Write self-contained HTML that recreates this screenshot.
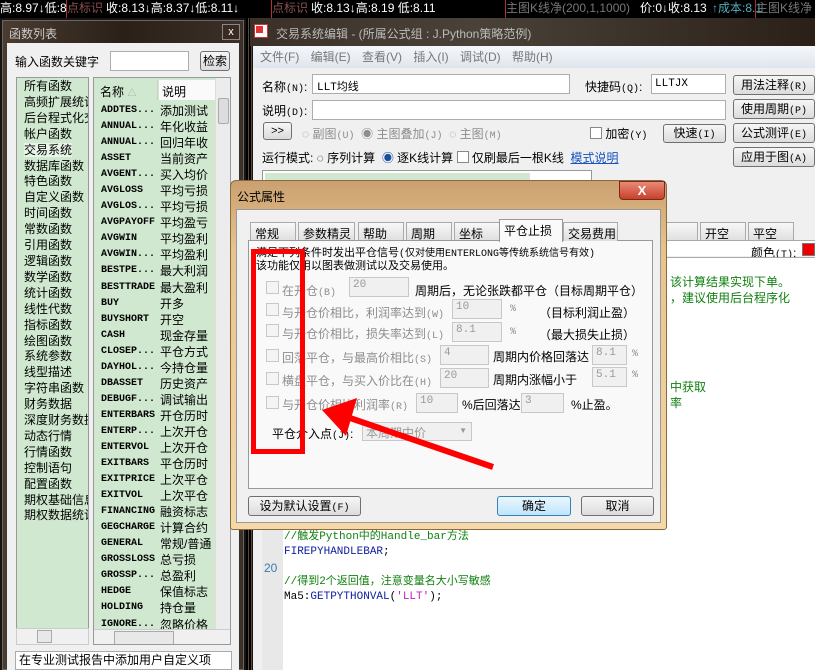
<!DOCTYPE html>
<html><head><meta charset="utf-8"><style>
*{margin:0;padding:0;box-sizing:border-box}
body{width:815px;height:670px;overflow:hidden;background:#1a1410;font-family:"Liberation Sans","Noto Sans CJK SC",sans-serif;font-size:12px;color:#000;position:relative}
.a{position:absolute;white-space:nowrap}
.in{position:absolute;background:#fff;border:1px solid #abadb3}
.btn{position:absolute;border:1px solid #707070;border-radius:3px;background:linear-gradient(#f6f6f6,#dcdcdc);text-align:center;font-size:12px;white-space:nowrap}
.mono{font-family:"Liberation Mono","Noto Sans CJK SC",monospace;font-size:10px}
.cb{position:absolute;width:13px;height:13px;border:1px solid #c8c8c8;background:#f4f4f4}
.dis{color:#8d8d8d}
.din{position:absolute;background:#f0f0f0;border:1px solid #c8c8c8;color:#999;font-size:11px;padding:1px 3px;font-family:"Liberation Mono",monospace}
.tab{position:absolute;top:222px;height:19px;border:1px solid #aaa;border-bottom:none;background:linear-gradient(#f8f8f8,#dedede);padding:2px 4px;font-size:12px;white-space:nowrap;overflow:hidden}
</style></head><body>
<div class="a" style="left:0;top:0;width:815px;height:18px;background:#000;color:#fff;font-size:12px;line-height:16px">
<span class="a" style="left:0">高:8.97↓低:8</span>
<span class="a" style="left:67px;color:#8a5050">点标识</span><span class="a" style="left:106px">收:8.13↓高:8.37↓低:8.11↓</span>
<span class="a" style="left:272px;color:#8a5050">点标识</span><span class="a" style="left:311px">收:8.13↓高:8.19 低:8.11</span>
<span class="a" style="left:506px;color:#777">主图K线净(200,1,1000)</span><span class="a" style="left:640px">价:0↓收:8.13</span><span class="a" style="left:712px;color:#5ab">↑成本:8.1</span><span class="a" style="left:756px;color:#777">主图K线净</span>
<div class="a" style="left:66px;top:0;width:1px;height:18px;background:#a33"></div>
<div class="a" style="left:271px;top:0;width:1px;height:18px;background:#a33"></div>
<div class="a" style="left:505px;top:0;width:1px;height:18px;background:#a33"></div>
<div class="a" style="left:755px;top:0;width:1px;height:18px;background:#a33"></div>
</div>

<div class="a" style="left:2px;top:20px;width:242px;height:650px;background:linear-gradient(90deg,#4a3c30,#2a2018 50%,#3c3028);border:1px solid #666"></div>
<div class="a" style="left:9px;top:25px;color:#ccc;font-size:12px">函数列表</div>
<div class="a" style="left:222px;top:24px;width:18px;height:16px;background:#3a2a22;border:1px solid #888;color:#fff;text-align:center;font-size:11px;line-height:14px">x</div>
<div class="a" style="left:7px;top:43px;width:232px;height:627px;background:#f0f0f0"></div>
<div class="a" style="left:15px;top:53px;font-size:12px">输入函数关键字</div>
<div class="in" style="left:110px;top:51px;width:79px;height:20px"></div>
<div class="btn" style="left:200px;top:51px;width:30px;height:20px;line-height:18px">检索</div>
<div class="a" style="left:16px;top:77px;width:73px;height:568px;background:#cfe8cf;border:1px solid #999;overflow:hidden;font-size:12px;line-height:15.9px;padding:1px 0 0 7px">所有函数<br>高频扩展统计<br>后台程式化交<br>帐户函数<br><span style="background:#e8f4e8">交易系统</span><br>数据库函数<br>特色函数<br>自定义函数<br>时间函数<br>常数函数<br>引用函数<br>逻辑函数<br>数学函数<br>统计函数<br>线性代数<br>指标函数<br>绘图函数<br>系统参数<br>线型描述<br>字符串函数<br>财务数据<br>深度财务数据<br>动态行情<br>行情函数<br>控制语句<br>配置函数<br>期权基础信息<br>期权数据统计</div>
<div class="a" style="left:16px;top:628px;width:73px;height:17px;background:#f0f0f0;border:1px solid #ccc"><div class="a" style="left:20px;top:1px;width:15px;height:13px;border:1px solid #aaa;background:#e8e8e8"></div></div>
<div class="a" style="left:93px;top:77px;width:138px;height:568px;background:#cfe8cf;border:1px solid #999;overflow:hidden">
<div class="a" style="left:2px;top:2px;width:62px;height:20px;background:#cfe8cf;border-right:1px solid #ccc;font-size:12px;padding:3px 4px">名称 <span style="color:#aaa;font-size:9px">△</span></div>
<div class="a" style="left:65px;top:2px;width:56px;height:20px;background:#fafafa;font-size:12px;padding:3px 3px">说明</div>
<div class="a" style="left:121px;top:0;width:16px;height:555px;background:#ececec;border-left:1px solid #ddd"><div class="a" style="left:2px;top:20px;width:11px;height:26px;background:#ddd;border:1px solid #aaa;border-radius:2px"></div></div>
<div class="a mono" style="left:7px;top:25px;line-height:16.05px;font-weight:bold;font-size:10px">ADDTES...<br>ANNUAL...<br>ANNUAL...<br>ASSET<br>AVGENT...<br>AVGLOSS<br>AVGLOS...<br>AVGPAYOFF<br>AVGWIN<br>AVGWIN...<br>BESTPE...<br>BESTTRADE<br>BUY<br>BUYSHORT<br>CASH<br>CLOSEP...<br>DAYHOL...<br>DBASSET<br>DEBUGF...<br>ENTERBARS<br>ENTERP...<br>ENTERVOL<br>EXITBARS<br>EXITPRICE<br>EXITVOL<br>FINANCING<br>GEGCHARGE<br>GENERAL<br>GROSSLOSS<br>GROSSP...<br>HEDGE<br>HOLDING<br>IGNORE...</div>
<div class="a" style="left:66px;top:25px;line-height:16.05px;font-size:12px;width:55px;overflow:hidden">添加测试<br>年化收益<br>回归年收<br>当前资产<br>买入均价<br>平均亏损<br>平均亏损<br>平均盈亏<br>平均盈利<br>平均盈利<br>最大利润<br>最大盈利<br>开多<br>开空<br>现金存量<br>平仓方式<br>今持仓量<br>历史资产<br>调试输出<br>开仓历时<br>上次开仓<br>上次开仓<br>平仓历时<br>上次平仓<br>上次平仓<br>融资标志<br>计算合约<br>常规/普通<br>总亏损<br>总盈利<br>保值标志<br>持仓量<br>忽略价格</div>
<div class="a" style="left:0;top:551px;width:138px;height:17px;background:#f0f0f0;border-top:1px solid #ccc"><div class="a" style="left:20px;top:1px;width:60px;height:14px;border:1px solid #aaa;background:#e8e8e8"></div></div>
</div>
<div class="a" style="left:15px;top:651px;width:217px;height:19px;background:#fff;border:1px solid #aaa;font-size:12px;padding-left:3px;line-height:17px">在专业测试报告中添加用户自定义项</div>

<div class="a" style="left:246px;top:18px;width:6px;height:652px;background:repeating-linear-gradient(90deg,#000 0 2px,#5a4a3a 2px 3px)"></div>
<div class="a" style="left:250px;top:18px;width:565px;height:28px;background:linear-gradient(90deg,#3a3028,#4a4238 40%,#2a2018)"></div>
<div class="a" style="left:254px;top:24px;width:14px;height:14px;background:#fff;border:1px solid #c33"><div class="a" style="left:1px;top:1px;width:7px;height:7px;background:#d33"></div></div>
<div class="a" style="left:276px;top:25px;color:#bbb;font-size:12px">交易系统编辑 - (所属公式组 : J.Python策略范例)</div>
<div class="a" style="left:253px;top:46px;width:562px;height:624px;background:#f0f0f0"></div>
<div class="a" style="left:253px;top:46px;width:562px;height:22px;background:linear-gradient(#f4f7fb,#e0e6ee);color:#777;font-size:12px;line-height:22px;padding-left:7px;word-spacing:8px">文件(F) 编辑(E) 查看(V) 插入(I) 调试(D) 帮助(H)</div>
<div class="a" style="left:262px;top:78px">名称<span class="mono">(N)</span>:</div>
<div class="in" style="left:312px;top:74px;width:258px;height:20px"><span class="a mono" style="left:4px;top:3px;font-size:11px">LLT均线</span></div>
<div class="a" style="left:585px;top:78px">快捷码<span class="mono">(Q)</span>:</div>
<div class="in" style="left:651px;top:74px;width:75px;height:20px"><span class="a mono" style="left:3px;top:3px;font-size:11px">LLTJX</span></div>
<div class="a" style="left:262px;top:102px">说明<span class="mono">(D)</span>:</div>
<div class="in" style="left:312px;top:100px;width:414px;height:20px"></div>
<div class="btn" style="left:733px;top:75px;width:82px;height:20px;line-height:18px">用法注释<span class="mono">(R)</span></div>
<div class="btn" style="left:733px;top:99px;width:82px;height:20px;line-height:18px">使用周期<span class="mono">(P)</span></div>
<div class="btn" style="left:733px;top:123px;width:82px;height:20px;line-height:18px">公式测评<span class="mono">(E)</span></div>
<div class="btn" style="left:733px;top:147px;width:82px;height:20px;line-height:18px">应用于图<span class="mono">(A)</span></div>
<div class="btn" style="left:263px;top:122px;width:29px;height:18px;line-height:16px;font-size:11px">&gt;&gt;</div>
<div class="a dis" style="left:302px;top:125px">◌ 副图<span class="mono">(U)</span>&nbsp; ◉ 主图叠加<span class="mono">(J)</span>&nbsp; ◌ 主图<span class="mono">(M)</span></div>
<div class="a" style="left:590px;top:125px"><span style="display:inline-block;width:12px;height:12px;border:1px solid #888;background:#fff;vertical-align:-1px"></span> 加密<span class="mono">(Y)</span></div>
<div class="btn" style="left:663px;top:124px;width:63px;height:19px;line-height:17px">快速<span class="mono">(I)</span></div>
<div class="a" style="left:262px;top:149px">运行模式: ◌ 序列计算 &nbsp;<span style="color:#1a4fa0">◉</span> 逐K线计算 <span style="display:inline-block;width:12px;height:12px;border:1px solid #888;background:#fff;vertical-align:-1px"></span> 仅刷最后一根K线 &nbsp;<span style="color:#1553c0;text-decoration:underline">模式说明</span></div>
<div class="a" style="left:262px;top:170px;width:330px;height:14px;background:#fff;border:1px solid #999"><div class="a" style="left:2px;top:2px;width:265px;height:12px;background:#cfe8cf"></div></div>
<div class="tab" style="left:650px;top:222px;width:48px">多</div>
<div class="tab" style="left:700px;width:46px">开空</div>
<div class="tab" style="left:748px;width:46px">平空</div>
<div class="a" style="left:262px;top:240px;width:553px;height:16px;background:#fff;border-top:1px solid #aaa"></div>
<div class="a" style="left:751px;top:244px">颜色<span class="mono">(T)</span>:</div>
<div class="a" style="left:802px;top:243px;width:13px;height:13px;background:#e00;border:1px solid #777"></div>
<div class="a" style="left:262px;top:257px;width:553px;height:413px;background:#fff;border-top:1px solid #aaa"></div>
<div class="a" style="left:262px;top:258px;width:21px;height:412px;background:#e8e8e8"></div>
<div class="a" style="left:670px;top:274px;color:#108010;font-size:12px;line-height:16px">该计算结果实现下单。<br>，建议使用后台程序化</div>
<div class="a" style="left:670px;top:379px;color:#108010;font-size:12px;line-height:16px">中获取<br>率</div>
<div class="a" style="left:264px;top:561px;color:#3a7ab0;font-size:12px">20</div>
<div class="a mono" style="left:284px;top:530px;line-height:15px;font-size:11px">
<span style="color:#108010">//触发Python中的Handle_bar方法</span><br><span style="color:#1020a0">FIREPYHANDLEBAR</span>;<br><br><span style="color:#108010">//得到2个返回值，注意变量名大小写敏感</span><br>Ma5:<span style="color:#1020a0">GETPYTHONVAL</span>(<span style="color:#c020c0">'LLT'</span>);</div>

<div class="a" style="left:230px;top:180px;width:437px;height:350px;background:linear-gradient(#caa070,#e8c48c 20%,#f4d8a8);border:1px solid #8a6a40;border-radius:6px 6px 3px 3px"></div>
<div class="a" style="left:237px;top:188px;font-size:12px">公式属性</div>
<div class="a" style="left:619px;top:181px;width:46px;height:19px;background:linear-gradient(#e88a78,#c8402c);border:1px solid #7a2a1a;border-radius:0 0 4px 4px;color:#fff;text-align:center;font-weight:bold;font-size:13px;line-height:17px">X</div>
<div class="a" style="left:236px;top:209px;width:425px;height:314px;background:#f0f0f0;border:1px solid #999"></div>
<div class="tab" style="left:250px;width:46px">常规</div>
<div class="tab" style="left:298px;width:57px">参数精灵</div>
<div class="tab" style="left:358px;width:46px">帮助</div>
<div class="tab" style="left:406px;width:46px">周期</div>
<div class="tab" style="left:454px;width:46px">坐标</div>
<div class="a" style="left:248px;top:240px;width:405px;height:249px;background:#f9f9f9;border:1px solid #999"></div>
<div class="tab" style="left:499px;top:219px;width:64px;height:23px;background:#fafafa;border-color:#999;z-index:2">平仓止损</div>
<div class="tab" style="left:563px;width:55px">交易费用</div>
<div class="a" style="left:256px;top:248px;font-size:11px;line-height:11.5px">满足下列条件时发出平仓信号<span class="mono">(仅对使用ENTERLONG等传统系统信号有效)</span><br>该功能仅用以图表做测试以及交易使用。</div>
<div class="cb" style="left:266px;top:281px"></div><div class="a dis" style="left:282px;top:282px">在开仓<span class="mono">(B)</span></div>
<div class="din" style="left:349px;top:277px;width:60px;height:20px">20</div>
<div class="a" style="left:415px;top:282px">周期后，无论张跌都平仓（目标周期平仓）</div>
<div class="cb" style="left:266px;top:303px"></div><div class="a dis" style="left:282px;top:304px">与开仓价相比，利润率达到<span class="mono">(W)</span></div>
<div class="din" style="left:452px;top:299px;width:50px;height:20px">10</div><div class="a dis mono" style="left:510px;top:304px">%</div><div class="a" style="left:539px;top:304px">（目标利润止盈）</div>
<div class="cb" style="left:266px;top:324px"></div><div class="a dis" style="left:282px;top:325px">与开仓价相比，损失率达到<span class="mono">(L)</span></div>
<div class="din" style="left:452px;top:322px;width:50px;height:20px">8.1</div><div class="a dis mono" style="left:510px;top:327px">%</div><div class="a" style="left:539px;top:326px">（最大损失止损）</div>
<div class="cb" style="left:266px;top:349px"></div><div class="a dis" style="left:282px;top:349px">回落平仓，与最高价相比<span class="mono">(S)</span></div>
<div class="din" style="left:440px;top:345px;width:49px;height:20px">4</div><div class="a" style="left:493px;top:348px">周期内价格回落达</div>
<div class="din" style="left:592px;top:345px;width:35px;height:20px">8.1</div><div class="a dis mono" style="left:632px;top:349px">%</div>
<div class="cb" style="left:266px;top:372px"></div><div class="a dis" style="left:282px;top:372px">横盘平仓，与买入价比在<span class="mono">(H)</span></div>
<div class="din" style="left:440px;top:368px;width:49px;height:20px">20</div><div class="a" style="left:493px;top:371px">周期内涨幅小于</div>
<div class="din" style="left:592px;top:367px;width:35px;height:20px">5.1</div><div class="a dis mono" style="left:632px;top:370px">%</div>
<div class="cb" style="left:266px;top:396px"></div><div class="a dis" style="left:282px;top:396px">与开仓价相比利润率<span class="mono">(R)</span></div>
<div class="din" style="left:416px;top:393px;width:42px;height:20px">10</div><div class="a" style="left:462px;top:396px">%后回落达</div>
<div class="din" style="left:521px;top:393px;width:43px;height:20px">3</div><div class="a" style="left:571px;top:396px">%止盈。</div>
<div class="a" style="left:272px;top:425px">平仓介入点<span class="mono">(J)</span>:</div>
<div class="din" style="left:362px;top:422px;width:110px;height:19px;font-size:12px;font-family:'Liberation Sans','Noto Sans CJK SC',sans-serif;color:#999">本周期中价<span style="position:absolute;right:4px;top:3px;font-size:8px">▼</span></div>
<div class="btn" style="left:248px;top:496px;width:113px;height:20px;line-height:18px">设为默认设置<span class="mono">(F)</span></div>
<div class="btn" style="left:497px;top:496px;width:74px;height:20px;line-height:18px;border-color:#3c7fb1;background:linear-gradient(#eaf6fd,#bee6fd)">确定</div>
<div class="btn" style="left:581px;top:496px;width:73px;height:20px;line-height:18px">取消</div>

<div class="a" style="left:251px;top:249px;width:54px;height:205px;border:5px solid #f00"></div>
<svg class="a" style="left:0;top:0" width="815" height="670"><line x1="493" y1="467" x2="350" y2="418" stroke="#f00" stroke-width="6"/><polygon points="322,410 357,398 346,436" fill="#f00"/></svg>
</body></html>
